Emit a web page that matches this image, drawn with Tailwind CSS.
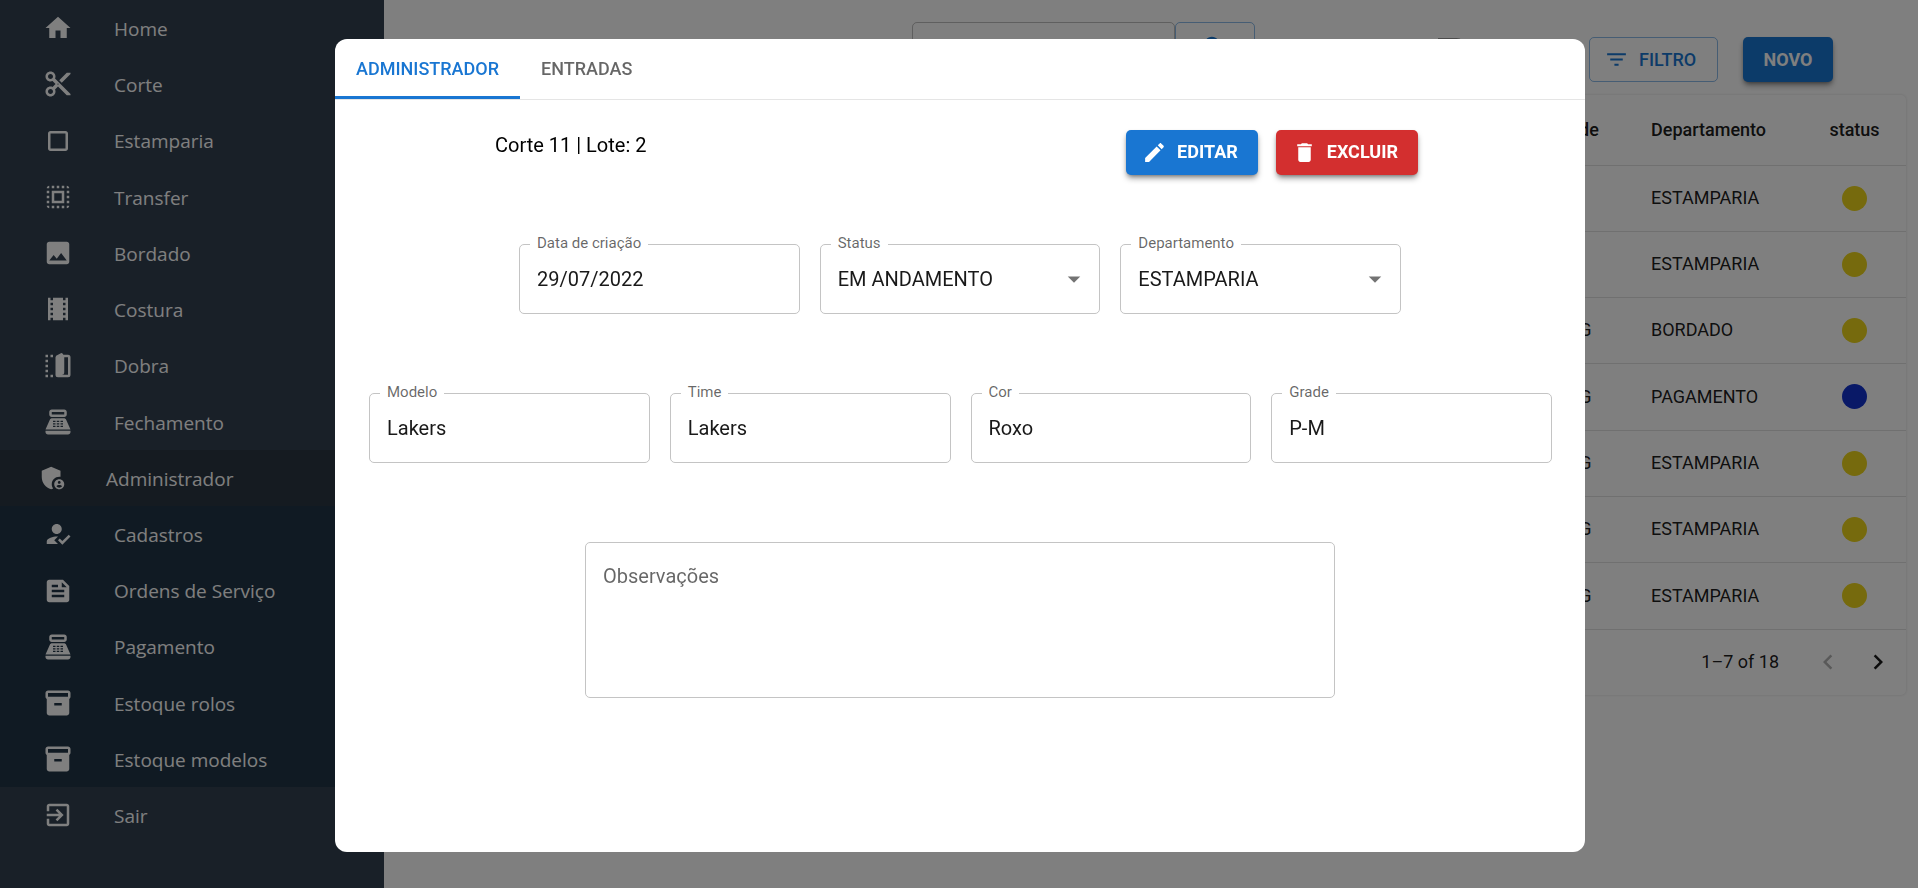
<!DOCTYPE html>
<html lang="pt-BR">
<head>
<meta charset="utf-8">
<title>Administrador</title>
<meta name="viewport" content="width=device-width, initial-scale=1">
<script src="https://cdn.jsdelivr.net/npm/@tailwindcss/browser@4"></script>
</head>
<body class="min-h-screen overflow-hidden bg-white font-['Roboto',sans-serif] text-black/90">
<svg class="hidden" aria-hidden="true">
  <symbol id="home" viewBox="0 0 24 24"><path d="M10 20v-6h4v6h5v-8h3L12 3 2 12h3v8z"/></symbol>
  <symbol id="cut" viewBox="0 0 24 24"><path d="M9.64 7.64c.23-.5.36-1.05.36-1.64 0-2.21-1.79-4-4-4S2 3.79 2 6s1.79 4 4 4c.59 0 1.14-.13 1.64-.36L10 12l-2.36 2.36C7.14 14.13 6.59 14 6 14c-2.21 0-4 1.79-4 4s1.79 4 4 4 4-1.79 4-4c0-.59-.13-1.14-.36-1.64L12 14l7 7h3v-1L9.64 7.64zM6 8c-1.1 0-2-.89-2-2s.9-2 2-2 2 .89 2 2-.9 2-2 2zm0 12c-1.1 0-2-.89-2-2s.9-2 2-2 2 .89 2 2-.9 2-2 2zm6-7.5c-.28 0-.5-.22-.5-.5s.22-.5.5-.5.5.22.5.5-.22.5-.5.5zM19 3l-6 6 2 2 7-7V3z"/></symbol>
  <symbol id="square" viewBox="0 0 24 24"><path d="M18 4H6c-1.1 0-2 .9-2 2v12c0 1.1.9 2 2 2h12c1.1 0 2-.9 2-2V6c0-1.1-.9-2-2-2zm0 14H6V6h12v12z"/></symbol>
  <symbol id="select-all" viewBox="0 0 24 24"><path d="M3 5h2V3c-1.1 0-2 .9-2 2zm0 8h2v-2H3v2zm4 8h2v-2H7v2zM3 9h2V7H3v2zm10-6h-2v2h2V3zm6 0v2h2c0-1.1-.9-2-2-2zM5 21v-2H3c0 1.1.9 2 2 2zm-2-4h2v-2H3v2zM9 3H7v2h2V3zm2 18h2v-2h-2v2zm8-8h2v-2h-2v2zm0 8c1.1 0 2-.9 2-2h-2v2zm0-12h2V7h-2v2zm0 8h2v-2h-2v2zm-4 4h2v-2h-2v2zm0-16h2V3h-2v2zM7 17h10V7H7v10zm2-8h6v6H9V9z"/></symbol>
  <symbol id="image" viewBox="0 0 24 24"><path d="M21 19V5c0-1.1-.9-2-2-2H5c-1.1 0-2 .9-2 2v14c0 1.1.9 2 2 2h14c1.1 0 2-.9 2-2zM8.5 13.5l2.5 3.01L14.5 12l4.5 6H5l3.5-4.5z"/></symbol>
  <symbol id="film" viewBox="0 0 24 24"><path d="M18 3v2h-2V3H8v2H6V3H4v18h2v-2h2v2h8v-2h2v2h2V3h-2zM8 17H6v-2h2v2zm0-4H6v-2h2v2zm0-4H6V7h2v2zm10 8h-2v-2h2v2zm0-4h-2v-2h2v2zm0-4h-2V7h2v2z"/></symbol>
  <symbol id="fold" viewBox="0 0 24 24"><path d="M2 3h2v2H2zm4 0h2v2H6zM2 7h2v2H2zm0 4h2v2H2zm0 4h2v2H2zm0 4h2v2H2zm4 0h2v2H6z"/><path fill-rule="evenodd" d="M12 3 14.3 1.8Q15.5 1.3 16.3 3H20Q22 3 22 5V19Q22 21 20 21H12Q10 21 10 19V5Q10 3.5 12 3zM17 5V17Q17 19 15 19H20V5z"/></symbol>
  <symbol id="register" viewBox="0 0 24 24"><path fill-rule="evenodd" d="M17 2H7c-1.1 0-2 .9-2 2v2c0 1.1.9 2 2 2h10c1.1 0 2-.9 2-2V4c0-1.1-.9-2-2-2zm0 4H7V4h10v2zM20 22H4c-1.1 0-2-.9-2-2v-1h20v1c0 1.1-.9 2-2 2zM18.53 10.19C18.21 9.47 17.49 9 16.7 9H7.3c-.79 0-1.51.47-1.83 1.19L2 18h20l-3.47-7.81zM8 11h2v1H8zM11 11h2v1h-2zM14 11h2v1h-2zM8 13h2v1H8zM11 13h2v1h-2zM14 13h2v1h-2zM8 15h2v1H8zM11 15h2v1h-2zM14 15h2v1h-2z"/></symbol>
  <symbol id="admin" viewBox="0 0 24 24"><path d="M17 11c.34 0 .67.04 1 .09V6.27L10.5 3 3 6.27v4.91c0 4.54 3.2 8.79 7.5 9.82.55-.13 1.08-.32 1.6-.55-.69-.98-1.1-2.17-1.1-3.45 0-3.31 2.69-6 6-6z"/><path d="M17 13c-2.21 0-4 1.79-4 4s1.79 4 4 4 4-1.79 4-4-1.79-4-4-4zm0 1.38c.62 0 1.12.51 1.12 1.12s-.51 1.12-1.12 1.12-1.12-.51-1.12-1.12.5-1.12 1.12-1.12zm0 5.37c-.93 0-1.74-.46-2.24-1.17.05-.72 1.51-1.08 2.24-1.08s2.19.36 2.24 1.08c-.5.71-1.31 1.17-2.24 1.17z"/></symbol>
  <symbol id="user-check" viewBox="0 0 24 24"><path d="M9 17l3-2.94c-.39-.04-.68-.06-1-.06-2.67 0-8 1.34-8 4v2h9l-3-3zm2-5c2.21 0 4-1.79 4-4s-1.79-4-4-4-4 1.79-4 4 1.79 4 4 4M15.47 20.5 12 17l1.4-1.41 2.07 2.08 5.13-5.17 1.4 1.41z"/></symbol>
  <symbol id="feed" viewBox="0 0 24 24"><path d="M16 3H5c-1.1 0-2 .9-2 2v14c0 1.1.9 2 2 2h14c1.1 0 2-.9 2-2V8l-5-5zM7 7h5v2H7V7zm10 10H7v-2h10v2zm0-4H7v-2h10v2zm-2-4V5l4 4h-4z"/></symbol>
  <symbol id="box" viewBox="0 0 24 24"><path d="M20 2H4c-1 0-2 .9-2 2v3.01c0 .72.43 1.34 1 1.69V20c0 1.1 1.1 2 2 2h14c.9 0 2-.9 2-2V8.7c.57-.35 1-.97 1-1.69V4c0-1.1-1-2-2-2zm-5 12H9v-2h6v2zm5-7H4V4h16v3z"/></symbol>
  <symbol id="exit" viewBox="0 0 24 24"><path d="M10.09 15.59L11.5 17l5-5-5-5-1.41 1.41L12.67 11H3v2h9.67l-2.58 2.59zM19 3H5c-1.11 0-2 .9-2 2v4h2V5h14v14H5v-4H3v4c0 1.1.89 2 2 2h14c1.1 0 2-.9 2-2V5c0-1.1-.9-2-2-2z"/></symbol>
</svg>

<div class="flex min-h-screen">
  <aside class="w-96 shrink-0 bg-[#324051] font-['Open_Sans',sans-serif] text-[19px] text-white">
    <nav class="grid min-h-[95vh] auto-rows-fr">
      <a href="#" class="flex items-center gap-[41px] pl-[43px]"><svg class="size-[30px] fill-current"><use href="#home"/></svg><span class="pt-0.5">Home</span></a>
      <a href="#" class="flex items-center gap-[41px] pl-[43px]"><svg class="size-[30px] fill-current"><use href="#cut"/></svg><span class="pt-0.5">Corte</span></a>
      <a href="#" class="flex items-center gap-[41px] pl-[43px]"><svg class="size-[30px] fill-current"><use href="#square"/></svg><span class="pt-0.5">Estamparia</span></a>
      <a href="#" class="flex items-center gap-[41px] pl-[43px]"><svg class="size-[30px] fill-current"><use href="#select-all"/></svg><span class="pt-0.5">Transfer</span></a>
      <a href="#" class="flex items-center gap-[41px] pl-[43px]"><svg class="size-[30px] fill-current"><use href="#image"/></svg><span class="pt-0.5">Bordado</span></a>
      <a href="#" class="flex items-center gap-[41px] pl-[43px]"><svg class="size-[30px] fill-current"><use href="#film"/></svg><span class="pt-0.5">Costura</span></a>
      <a href="#" class="flex items-center gap-[41px] pl-[43px]"><svg class="size-[30px] fill-current"><use href="#fold"/></svg><span class="pt-0.5">Dobra</span></a>
      <a href="#" class="flex items-center gap-[41px] pl-[43px]"><svg class="size-[30px] fill-current"><use href="#register"/></svg><span class="pt-0.5">Fechamento</span></a>
      <a href="#" class="flex items-center gap-[38px] bg-[#2a3642] pl-[38px]" aria-current="page"><svg class="size-[30px] fill-current"><use href="#admin"/></svg><span class="pt-0.5">Administrador</span></a>
      <a href="#" class="flex items-center gap-[41px] bg-[#203446] pl-[43px]"><svg class="size-[30px] fill-current"><use href="#user-check"/></svg><span class="pt-0.5">Cadastros</span></a>
      <a href="#" class="flex items-center gap-[41px] bg-[#203446] pl-[43px]"><svg class="size-[30px] fill-current"><use href="#feed"/></svg><span class="pt-0.5">Ordens de Serviço</span></a>
      <a href="#" class="flex items-center gap-[41px] bg-[#203446] pl-[43px]"><svg class="size-[30px] fill-current"><use href="#register"/></svg><span class="pt-0.5">Pagamento</span></a>
      <a href="#" class="flex items-center gap-[41px] bg-[#203446] pl-[43px]"><svg class="size-[30px] fill-current"><use href="#box"/></svg><span class="pt-0.5">Estoque rolos</span></a>
      <a href="#" class="flex items-center gap-[41px] bg-[#203446] pl-[43px]"><svg class="size-[30px] fill-current"><use href="#box"/></svg><span class="pt-0.5">Estoque modelos</span></a>
      <a href="#" class="flex items-center gap-[41px] pl-[43px]"><svg class="size-[30px] fill-current"><use href="#exit"/></svg><span class="pt-0.5">Sair</span></a>
    </nav>
  </aside>

  <main class="min-w-0 flex-1 px-3">
    <div class="flex h-[95px] items-start justify-end pr-[73px]">
      <div class="mr-[168px] flex pt-[22px]">
        <input type="text" aria-label="Pesquisar" class="h-[70px] w-[263px] rounded-[5px] border border-black/25 px-4 text-xl">
        <button type="button" aria-label="Buscar" class="flex w-[80px] justify-center rounded-[5px] border border-[#1976d2]/50 pt-2.5 text-[#1976d2]">
          <svg class="size-[30px] fill-current" viewBox="0 0 24 24"><path d="M15.5 14h-.79l-.28-.27C15.41 12.59 16 11.11 16 9.5 16 5.91 13.09 3 9.5 3S3 5.91 3 9.5 5.91 16 9.5 16c1.61 0 3.09-.59 4.23-1.57l.27.28v.79l5 4.99L20.49 19l-4.99-5zm-6 0C7.01 14 5 11.99 5 9.5S7.01 5 9.5 5 14 7.01 14 9.5 11.99 14 9.5 14z"/></svg>
        </button>
      </div>
      <input type="checkbox" role="switch" aria-label="Alternar" class="mt-[38px] mr-[124px] h-[17px] w-[42px] appearance-none rounded-full bg-linear-to-r from-white from-35% to-black/40 to-35%">
      <button type="button" class="mt-[37px] mr-[25px] flex h-[45px] w-[129px] items-center gap-2.5 rounded-[5px] border border-[#1976d2]/50 pl-3.5 text-lg font-medium text-[#1976d2]">
        <svg class="size-[25px] fill-current" viewBox="0 0 24 24"><path d="M10 18h4v-2h-4v2zM3 6v2h18V6H3zm3 7h12v-2H6v2z"/></svg>FILTRO
      </button>
      <button type="button" class="mt-[37px] h-[45px] w-[90px] rounded-[5px] bg-[#1976d2] text-lg font-bold text-white shadow-md shadow-black/40">NOVO</button>
    </div>

    <section class="flex flex-col items-end rounded-[5px] shadow-[0_0_3px_rgba(0,0,0,0.15)]">
      <table class="w-[387px] table-fixed border-collapse text-lg">
        <thead>
          <tr class="h-[70px] border-b border-[#e0e0e0]">
            <th class="w-[112px] font-medium">Grade</th>
            <th class="pl-5 text-left font-medium">Departamento</th>
            <th class="w-[103px] font-medium">status</th>
          </tr>
        </thead>
        <tbody class="text-center">
          <tr class="h-[66px] border-b border-[#e0e0e0]"><td>P</td><td class="pl-5 text-left">ESTAMPARIA</td><td><span class="mx-auto block size-[25px] rounded-full bg-[#ecd41a]"></span></td></tr>
          <tr class="h-[66px] border-b border-[#e0e0e0]"><td>P</td><td class="pl-5 text-left">ESTAMPARIA</td><td><span class="mx-auto block size-[25px] rounded-full bg-[#ecd41a]"></span></td></tr>
          <tr class="h-[66px] border-b border-[#e0e0e0]"><td>M-G</td><td class="pl-5 text-left">BORDADO</td><td><span class="mx-auto block size-[25px] rounded-full bg-[#ecd41a]"></span></td></tr>
          <tr class="h-[67px] border-b border-[#e0e0e0]"><td>M-G</td><td class="pl-5 text-left">PAGAMENTO</td><td><span class="mx-auto block size-[25px] rounded-full bg-[#1233cf]"></span></td></tr>
          <tr class="h-[66px] border-b border-[#e0e0e0]"><td>M-G</td><td class="pl-5 text-left">ESTAMPARIA</td><td><span class="mx-auto block size-[25px] rounded-full bg-[#ecd41a]"></span></td></tr>
          <tr class="h-[66px] border-b border-[#e0e0e0]"><td>M-G</td><td class="pl-5 text-left">ESTAMPARIA</td><td><span class="mx-auto block size-[25px] rounded-full bg-[#ecd41a]"></span></td></tr>
          <tr class="h-[67px] border-b border-[#e0e0e0]"><td>M-G</td><td class="pl-5 text-left">ESTAMPARIA</td><td><span class="mx-auto block size-[25px] rounded-full bg-[#ecd41a]"></span></td></tr>
        </tbody>
      </table>
      <div class="flex h-[65px] items-center pr-[13px] text-lg">
        <span class="mr-[34px]">1–7 of 18</span>
        <button type="button" aria-label="Página anterior" disabled class="mr-5 text-black/30"><svg class="size-[30px] fill-current" viewBox="0 0 24 24"><path d="M15.41 7.41 14 6l-6 6 6 6 1.41-1.41L10.83 12z"/></svg></button>
        <button type="button" aria-label="Próxima página"><svg class="size-[30px] fill-current" viewBox="0 0 24 24"><path d="M10 6 8.59 7.41 13.17 12l-4.58 4.59L10 18l6-6z"/></svg></button>
      </div>
    </section>
  </main>
</div>

<div class="fixed inset-0 flex items-center justify-center bg-black/50 pt-0.5 pl-0.5">
  <div role="dialog" aria-modal="true" aria-label="Corte 11, lote 2" class="min-h-[813px] w-full max-w-[1250px] rounded-xl bg-white">
    <div role="tablist" class="flex h-[61px] border-b border-[#e5e5e5] text-lg font-medium">
      <button type="button" role="tab" aria-selected="true" class="h-[60px] border-b-3 border-[#1976d2] px-[21px] pt-[3px] text-[#1976d2]">ADMINISTRADOR</button>
      <button type="button" role="tab" aria-selected="false" class="h-[60px] px-[21px] text-black/60">ENTRADAS</button>
    </div>

    <div class="flex items-start justify-between pt-[30px] pr-[167px] pl-40">
      <h1 class="text-xl leading-[30px] text-black">Corte 11 | Lote: 2</h1>
      <div class="flex gap-[18px] text-lg font-bold text-white">
        <button type="button" class="flex h-[45px] items-center gap-2.5 rounded-[5px] bg-[#1976d2] pr-5 pl-4 shadow-md shadow-black/40"><svg class="size-[25px] fill-current" viewBox="0 0 24 24"><path d="M3 17.25V21h3.75L17.81 9.94l-3.75-3.75L3 17.25zM20.71 7.04c.39-.39.39-1.02 0-1.41l-2.34-2.34c-.39-.39-1.02-.39-1.41 0l-1.83 1.83 3.75 3.75 1.83-1.83z"/></svg>EDITAR</button>
        <button type="button" class="flex h-[45px] items-center gap-2.5 rounded-[5px] bg-[#d32f2f] pr-5 pl-4 shadow-md shadow-black/40"><svg class="size-[25px] fill-current" viewBox="0 0 24 24"><path d="M6 19c0 1.1.9 2 2 2h8c1.1 0 2-.9 2-2V7H6v12zM19 4h-3.5l-1-1h-5l-1 1H5v2h14V4z"/></svg>EXCLUIR</button>
      </div>
    </div>

    <form>
      <div class="mx-auto mt-[69px] grid w-full max-w-[882px] grid-cols-3 gap-5">
        <div class="relative">
          <input id="data" type="text" value="29/07/2022" class="h-[70px] w-full rounded-[5px] border border-[#c4c4c4] px-[17px] text-xl">
          <label for="data" class="absolute -top-2.5 left-[11px] bg-white px-[7px] text-[15px] leading-[18px] text-black/60">Data de criação</label>
        </div>
        <div class="relative">
          <select id="status" class="h-[70px] w-full appearance-none rounded-[5px] border border-[#c4c4c4] px-[17px] text-xl"><option>EM ANDAMENTO</option></select>
          <label for="status" class="absolute -top-2.5 left-[11px] bg-white px-[7px] text-[15px] leading-[18px] text-black/60">Status</label>
          <svg class="pointer-events-none absolute top-5 right-[11px] size-[30px] fill-black/55" viewBox="0 0 24 24"><path d="M7 10l5 5 5-5z"/></svg>
        </div>
        <div class="relative">
          <select id="departamento" class="h-[70px] w-full appearance-none rounded-[5px] border border-[#c4c4c4] px-[17px] text-xl"><option>ESTAMPARIA</option></select>
          <label for="departamento" class="absolute -top-2.5 left-[11px] bg-white px-[7px] text-[15px] leading-[18px] text-black/60">Departamento</label>
          <svg class="pointer-events-none absolute top-5 right-[11px] size-[30px] fill-black/55" viewBox="0 0 24 24"><path d="M7 10l5 5 5-5z"/></svg>
        </div>
      </div>

      <div class="mt-[79px] grid grid-cols-4 gap-5 pr-[33px] pl-[34px]">
        <div class="relative">
          <input id="modelo" type="text" value="Lakers" class="h-[70px] w-full rounded-[5px] border border-[#c4c4c4] px-[17px] text-xl">
          <label for="modelo" class="absolute -top-2.5 left-[11px] bg-white px-[7px] text-[15px] leading-[18px] text-black/60">Modelo</label>
        </div>
        <div class="relative">
          <input id="time" type="text" value="Lakers" class="h-[70px] w-full rounded-[5px] border border-[#c4c4c4] px-[17px] text-xl">
          <label for="time" class="absolute -top-2.5 left-[11px] bg-white px-[7px] text-[15px] leading-[18px] text-black/60">Time</label>
        </div>
        <div class="relative">
          <input id="cor" type="text" value="Roxo" class="h-[70px] w-full rounded-[5px] border border-[#c4c4c4] px-[17px] text-xl">
          <label for="cor" class="absolute -top-2.5 left-[11px] bg-white px-[7px] text-[15px] leading-[18px] text-black/60">Cor</label>
        </div>
        <div class="relative">
          <input id="grade" type="text" value="P-M" class="h-[70px] w-full rounded-[5px] border border-[#c4c4c4] px-[17px] text-xl">
          <label for="grade" class="absolute -top-2.5 left-[11px] bg-white px-[7px] text-[15px] leading-[18px] text-black/60">Grade</label>
        </div>
      </div>

      <div class="mx-auto mt-[79px] w-full max-w-[750px]">
        <textarea aria-label="Observações" placeholder="Observações" class="block h-[156px] w-full resize-none rounded-[5px] border border-[#c4c4c4] px-[17px] py-[19px] text-xl placeholder:text-black/60"></textarea>
      </div>
    </form>
  </div>
</div>
</body>
</html>
